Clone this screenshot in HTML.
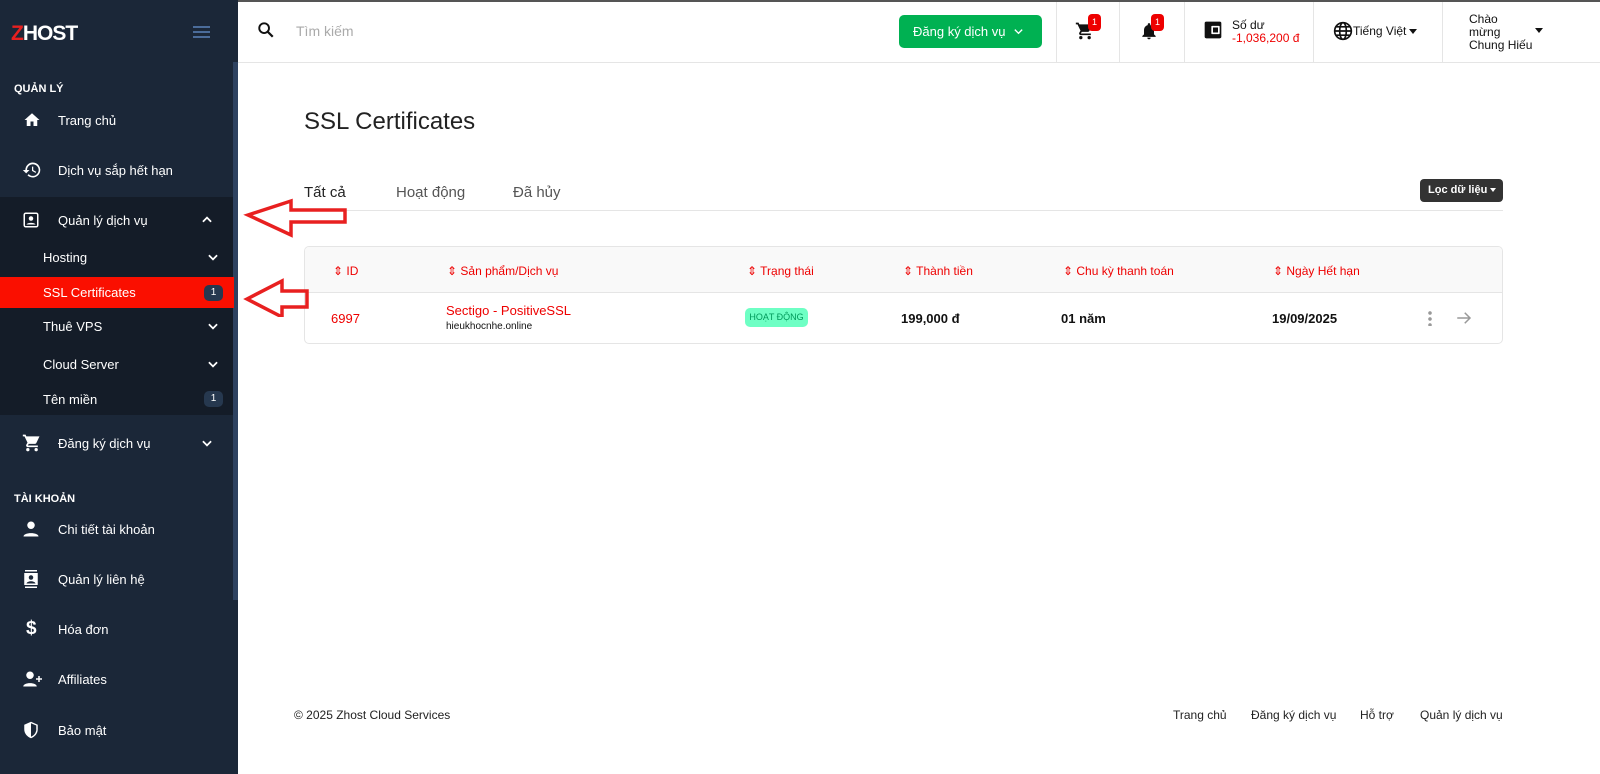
<!DOCTYPE html>
<html><head><meta charset="utf-8"><style>
*{margin:0;padding:0;box-sizing:border-box}
body{width:1600px;height:774px;overflow:hidden;font-family:"Liberation Sans","Noto Sans CJK SC",sans-serif;background:#fff;position:relative;font-size:13px;color:#111}
.top{position:absolute;top:0;left:0;width:1600px;height:2px;background:#555}
.sb{position:absolute;top:0;left:0;width:238px;height:774px;background:#1b2738;color:#fff}
.sb .scroll{position:absolute;left:233px;top:62px;width:5px;height:538px;background:#2e4260}
.logo{position:absolute;left:11px;top:22px;font-weight:bold;font-size:21px;letter-spacing:-1px}
.logo span{color:#e82020}
.ham{position:absolute;left:193px;top:26px;width:17px}
.ham i{display:block;height:2px;background:#4b6c9a;margin-bottom:3px}
.sec{position:absolute;left:14px;font-size:11px;font-weight:bold}
.it{position:absolute;left:0;width:233px;height:36px;display:flex;align-items:center;font-size:13px}
.it svg{position:absolute;left:22px}
.it .t{position:absolute;left:58px}
.sub .t{left:43px}
.chev{position:absolute;left:206px}
.badge{position:absolute;left:204px;background:#26384f;color:#fff;font-size:10px;width:19px;height:16px;border-radius:5px;text-align:center;line-height:16px}
.dark{position:absolute;left:0;top:197px;width:233px;height:218px;background:#141c28}
.hdr{position:absolute;left:238px;top:2px;width:1362px;height:61px;border-bottom:1px solid #e5e5e5}
.vl{position:absolute;top:2px;width:1px;height:60px;background:#e5e5e5}
.btn{position:absolute;left:899px;top:15px;width:143px;height:33px;background:#00b152;border-radius:5px;color:#fff;font-size:13px;line-height:33px;padding-left:14px}
.rb{position:absolute;background:#e00;color:#fff;font-size:9px;width:13px;height:17px;border-radius:4px;text-align:center;line-height:17px}
.tab{position:absolute;top:184px;font-size:15px;color:#555}
.card{position:absolute;left:304px;top:246px;width:1199px;height:98px;border:1px solid #e5e5e5;border-radius:5px;overflow:hidden}
.th{height:46px;background:#f9f9f9;border-bottom:1px solid #e5e5e5;position:relative}
.th span{position:absolute;top:17px;color:#e00;font-size:12px}
.td{position:absolute;top:65px;font-size:13px}
.foot{position:absolute;top:708px;font-size:12px;color:#222}
</style></head><body>
<div class="top"></div>
<div class="sb">
<div class="dark"></div>
<div class="scroll"></div>
<div class="logo"><span>Z</span>HOST</div>
<div class="ham"><i></i><i></i><i></i></div>
<div class="sec" style="top:83px">QUẢN LÝ</div>
<div class="it" style="top:102px"><svg width="20" height="18" viewBox="0 0 24 24"><path d="M10 20v-6h4v6h5v-8h3L12 3 2 12h3v8z" fill="#fff"/></svg><span class="t">Trang chủ</span></div>
<div class="it" style="top:152px"><svg width="20" height="20" viewBox="0 0 24 24"><path d="M13 3a9 9 0 0 0-9 9H1l4 4 4-4H6a7 7 0 1 1 2 5l-1.4 1.4A9 9 0 1 0 13 3zm-1 5v5l4.3 2.5.7-1.2-3.5-2.1V8z" fill="#fff"/></svg><span class="t">Dịch vụ sắp hết hạn</span></div>
<div class="it" style="top:202px"><svg width="18" height="18" viewBox="0 0 24 24"><rect x="3" y="3" width="18" height="18" rx="2" fill="none" stroke="#fff" stroke-width="2"/><circle cx="12" cy="10" r="3" fill="#fff"/><path d="M6 18c1-3 11-3 12 0z" fill="#fff"/></svg><span class="t">Quản lý dịch vụ</span><svg class="chev" style="left:200px" width="14" height="14" viewBox="0 0 24 24"><path d="M5 15l7-7 7 7" stroke="#fff" stroke-width="3" fill="none"/></svg></div>
<div class="it sub" style="top:239px"><span class="t">Hosting</span><svg style="left:206px" width="14" height="14" viewBox="0 0 24 24"><path d="M5 9l7 7 7-7" stroke="#fff" stroke-width="3" fill="none"/></svg></div>
<div class="it sub" style="top:277px;height:31px;background:#fa0f00;width:234px"><span class="t">SSL Certificates</span><span class="badge">1</span></div>
<div class="it sub" style="top:308px"><span class="t">Thuê VPS</span><svg style="left:206px" width="14" height="14" viewBox="0 0 24 24"><path d="M5 9l7 7 7-7" stroke="#fff" stroke-width="3" fill="none"/></svg></div>
<div class="it sub" style="top:346px"><span class="t">Cloud Server</span><svg style="left:206px" width="14" height="14" viewBox="0 0 24 24"><path d="M5 9l7 7 7-7" stroke="#fff" stroke-width="3" fill="none"/></svg></div>
<div class="it sub" style="top:381px"><span class="t">Tên miền</span><span class="badge">1</span></div>
<div class="it" style="top:425px"><svg width="20" height="20" viewBox="0 0 24 24"><path d="M7 18a2 2 0 1 0 0 4 2 2 0 0 0 0-4zm10 0a2 2 0 1 0 0 4 2 2 0 0 0 0-4zM1 2v2h2l3.6 7.6L5.2 14c-.8 1.4.2 3 1.8 3h12v-2H7l1.1-2h7.4c.8 0 1.4-.4 1.7-1L21 4H5.2L4.3 2z" fill="#fff"/></svg><span class="t">Đăng ký dịch vụ</span><svg style="left:200px" width="14" height="14" viewBox="0 0 24 24"><path d="M5 9l7 7 7-7" stroke="#fff" stroke-width="3" fill="none"/></svg></div>
<div class="sec" style="top:493px">TÀI KHOẢN</div>
<div class="it" style="top:511px"><svg width="18" height="18" viewBox="0 0 24 24"><circle cx="12" cy="7" r="5" fill="#fff"/><path d="M2 22c0-6 20-6 20 0z" fill="#fff"/></svg><span class="t">Chi tiết tài khoản</span></div>
<div class="it" style="top:561px"><svg width="18" height="20" viewBox="0 0 24 24"><path d="M4 0h16v2H4zM4 22h16v2H4zM3 4h18v16H3z" fill="#fff"/><circle cx="12" cy="10" r="3" fill="#1b2738"/><path d="M6 18c1-4 11-4 12 0z" fill="#1b2738"/></svg><span class="t">Quản lý liên hệ</span></div>
<div class="it" style="top:611px"><span style="position:absolute;left:26px;font-size:19px;font-weight:bold">$</span><span class="t">Hóa đơn</span></div>
<div class="it" style="top:661px"><svg width="22" height="18" viewBox="0 0 26 24"><circle cx="9" cy="7" r="5" fill="#fff"/><path d="M0 22c0-6 18-6 18 0z" fill="#fff"/><path d="M21 8v8M17 12h8" stroke="#fff" stroke-width="2"/></svg><span class="t">Affiliates</span></div>
<div class="it" style="top:712px"><svg width="18" height="20" viewBox="0 0 24 24"><path d="M12 1L3 5v6c0 6 4 10 9 12 5-2 9-6 9-12V5z" fill="#fff"/><path d="M12 3v18c4-2 7-5 7-10V6z" fill="#1b2738"/><path d="M12 12h7" stroke="#1b2738"/></svg><span class="t">Bảo mật</span></div>
</div>
<div class="hdr"></div>
<svg style="position:absolute;left:257px;top:21px" width="18" height="18" viewBox="0 0 24 24"><circle cx="9.5" cy="9.5" r="6.5" stroke="#111" stroke-width="2.5" fill="none"/><path d="M14 14l7 7" stroke="#111" stroke-width="3"/></svg>
<div style="position:absolute;left:296px;top:23px;font-size:14px;color:#aaa">Tìm kiếm</div>
<div class="btn">Đăng ký dịch vụ <svg style="position:absolute;left:114px;top:12px" width="11" height="9" viewBox="0 0 24 16"><path d="M4 4l8 8 8-8" stroke="#fff" stroke-width="3" fill="none"/></svg></div>
<div class="vl" style="left:1056px"></div><div class="vl" style="left:1119px"></div><div class="vl" style="left:1184px"></div><div class="vl" style="left:1313px"></div><div class="vl" style="left:1442px"></div>
<svg style="position:absolute;left:1074px;top:21px" width="22" height="20" viewBox="0 0 24 24"><path d="M7 18a2 2 0 1 0 0 4 2 2 0 0 0 0-4zm10 0a2 2 0 1 0 0 4 2 2 0 0 0 0-4zM1 2v2h2l3.6 7.6L5.2 14c-.8 1.4.2 3 1.8 3h12v-2H7l1.1-2h7.4c.8 0 1.4-.4 1.7-1L21 4H5.2L4.3 2z" fill="#111"/></svg>
<div class="rb" style="left:1088px;top:14px">1</div>
<svg style="position:absolute;left:1139px;top:20px" width="20" height="22" viewBox="0 0 24 24"><path d="M12 22a2 2 0 0 0 2-2h-4a2 2 0 0 0 2 2zm6-6V11c0-3-2-5.5-4.5-6V4a1.5 1.5 0 0 0-3 0v1C8 5.5 6 8 6 11v5l-2 2v1h16v-1z" fill="#111"/></svg>
<div class="rb" style="left:1151px;top:14px">1</div>
<svg style="position:absolute;left:1203px;top:20px" width="20" height="20" viewBox="0 0 24 24"><rect x="2" y="2" width="20" height="20" rx="2" fill="#111"/><rect x="10" y="7" width="10" height="10" rx="1" fill="#fff"/><rect x="12" y="9" width="6" height="6" fill="#111"/></svg>
<div style="position:absolute;left:1232px;top:18px;font-size:12px">Số dư</div>
<div style="position:absolute;left:1232px;top:31px;font-size:12px;color:#e00">-1,036,200 đ</div>
<svg style="position:absolute;left:1333px;top:21px" width="20" height="20" viewBox="0 0 24 24" fill="none" stroke="#111" stroke-width="2"><circle cx="12" cy="12" r="10"/><ellipse cx="12" cy="12" rx="4" ry="10"/><path d="M2 12h20M4 7h16M4 17h16"/></svg>
<div style="position:absolute;left:1353px;top:24px;font-size:12px">Tiếng Việt</div>
<div style="position:absolute;left:1409px;top:29px;border:4.5px solid transparent;border-top:5px solid #111"></div>
<div style="position:absolute;left:1469px;top:13px;font-size:12px;line-height:13px">Chào<br>mừng<br>Chung Hiếu</div>
<div style="position:absolute;left:1535px;top:28px;border:4.5px solid transparent;border-top:5px solid #111"></div>

<div style="position:absolute;left:304px;top:108px;font-size:24px;color:#222">SSL Certificates</div>
<div class="tab" style="left:304px;color:#222">Tất cả</div>
<div class="tab" style="left:396px">Hoạt động</div>
<div class="tab" style="left:513px">Đã hủy</div>
<div style="position:absolute;left:304px;top:210px;width:1199px;height:1px;background:#e5e5e5"></div>
<div style="position:absolute;left:1420px;top:179px;width:83px;height:23px;background:#333;border-radius:4px;color:#fff;font-size:11px;font-weight:bold;line-height:23px;padding-left:8px">Lọc dữ liệu <span style="display:inline-block;border:3px solid transparent;border-top:4px solid #fff;vertical-align:middle;margin-top:3px"></span></div>

<div class="card"><div class="th">
<span style="left:28px">⇕ ID</span><span style="left:142px">⇕ Sản phẩm/Dịch vụ</span><span style="left:442px">⇕ Trạng thái</span><span style="left:598px">⇕ Thành tiền</span><span style="left:758px">⇕ Chu kỳ thanh toán</span><span style="left:968px">⇕ Ngày Hết hạn</span>
</div></div>
<div class="td" style="left:331px;top:311px;color:#e00">6997</div>
<div class="td" style="left:446px;top:303px;color:#e00">Sectigo - PositiveSSL</div>
<div class="td" style="left:446px;top:321px;font-size:10px">hieukhocnhe.online</div>
<div style="position:absolute;left:745px;top:308px;width:63px;height:19px;background:#6effc4;border-radius:5px;color:#00995a;font-size:9px;line-height:19px;text-align:center">HOẠT ĐỘNG</div>
<div class="td" style="left:901px;top:311px;font-weight:bold">199,000 đ</div>
<div class="td" style="left:1061px;top:311px;font-weight:bold">01 năm</div>
<div class="td" style="left:1272px;top:311px;font-weight:bold">19/09/2025</div>
<div style="position:absolute;left:1428px;top:310px;width:4px;height:16px;background:radial-gradient(circle,#999 1.6px,transparent 2px) 0 0/4px 6px"></div>
<svg style="position:absolute;left:1455px;top:309px" width="18" height="18" viewBox="0 0 24 24"><path d="M3 12h17M13 5l7 7-7 7" stroke="#999" stroke-width="2" fill="none"/></svg>

<svg style="position:absolute;left:238px;top:195px" width="110" height="122" viewBox="0 0 110 122" fill="none" stroke="#e82020" stroke-width="3.5">
<path d="M10 20L53 6v9h54v12H53v13z"/>
<path d="M9 104L44 86v10h25v16H44v10z" />
</svg>

<div class="foot" style="left:294px">© 2025 Zhost Cloud Services</div>
<div class="foot" style="left:1173px">Trang chủ</div>
<div class="foot" style="left:1251px">Đăng ký dịch vụ</div>
<div class="foot" style="left:1360px">Hỗ trợ</div>
<div class="foot" style="left:1420px">Quản lý dịch vụ</div>
</body></html>
